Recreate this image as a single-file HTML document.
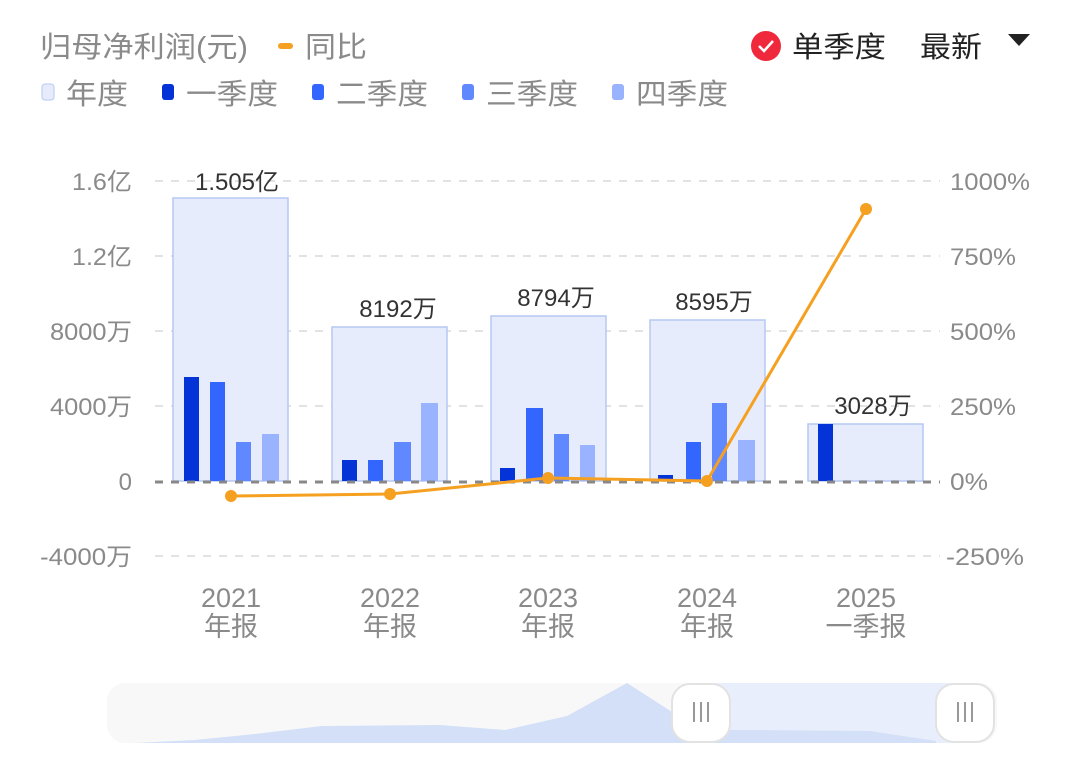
<!DOCTYPE html>
<html><head><meta charset="utf-8"><style>
html,body{margin:0;padding:0;background:#fff;width:1072px;height:764px;overflow:hidden;font-family:"Liberation Sans","Noto Sans CJK SC",sans-serif}
</style></head><body>
<svg width="1072" height="764" xmlns="http://www.w3.org/2000/svg" style="position:absolute;left:0;top:0;font-family:'Liberation Sans','Noto Sans CJK SC',sans-serif">
<!-- header -->
<text x="40" y="57" font-size="29" fill="#8a8a8a" textLength="208" lengthAdjust="spacingAndGlyphs">归母净利润(元)</text>
<rect x="278" y="43" width="15" height="6" rx="3" fill="#f5a020"/>
<text x="305" y="57" font-size="29" fill="#8a8a8a" textLength="62" lengthAdjust="spacingAndGlyphs">同比</text>
<circle cx="766" cy="46" r="15" fill="#f0283c"/>
<path d="M759 46 l5 5 l9 -10" stroke="#fff" stroke-width="2.5" fill="none"/>
<text x="792" y="57" font-size="29" fill="#222" textLength="94" lengthAdjust="spacingAndGlyphs">单季度</text>
<text x="920" y="57" font-size="29" fill="#222" textLength="62" lengthAdjust="spacingAndGlyphs">最新</text>
<path d="M1008 34 h22 l-11 12 z" fill="#222"/>
<!-- legend -->
<rect x="42" y="84" width="12" height="16" rx="3" fill="#e6ecfb" stroke="#b6c8f3"/>
<text x="66" y="104" font-size="29" fill="#8a8a8a" textLength="62" lengthAdjust="spacingAndGlyphs">年度</text>
<rect x="162" y="84" width="12" height="16" rx="3" fill="#0433d8"/>
<text x="186" y="104" font-size="29" fill="#8a8a8a" textLength="92" lengthAdjust="spacingAndGlyphs">一季度</text>
<rect x="312" y="84" width="12" height="16" rx="3" fill="#3366ff"/>
<text x="336" y="104" font-size="29" fill="#8a8a8a" textLength="92" lengthAdjust="spacingAndGlyphs">二季度</text>
<rect x="462" y="84" width="12" height="16" rx="3" fill="#6088ff"/>
<text x="486" y="104" font-size="29" fill="#8a8a8a" textLength="92" lengthAdjust="spacingAndGlyphs">三季度</text>
<rect x="612" y="84" width="12" height="16" rx="3" fill="#9ab3ff"/>
<text x="636" y="104" font-size="29" fill="#8a8a8a" textLength="92" lengthAdjust="spacingAndGlyphs">四季度</text>
<!-- grid -->
<g stroke="#e2e2e2" stroke-width="2" stroke-dasharray="8,8">
<line x1="155" y1="181" x2="940" y2="181"/><line x1="155" y1="256" x2="940" y2="256"/>
<line x1="155" y1="331" x2="940" y2="331"/><line x1="155" y1="406" x2="940" y2="406"/>
<line x1="155" y1="556" x2="940" y2="556"/>
</g>
<g font-size="24" fill="#8a8a8a" text-anchor="end">
<text x="132" y="190" textLength="60" lengthAdjust="spacingAndGlyphs">1.6亿</text><text x="132" y="265" textLength="60" lengthAdjust="spacingAndGlyphs">1.2亿</text><text x="132" y="340" textLength="82" lengthAdjust="spacingAndGlyphs">8000万</text>
<text x="132" y="415" textLength="82" lengthAdjust="spacingAndGlyphs">4000万</text><text x="132" y="490">0</text><text x="132" y="565" textLength="92" lengthAdjust="spacingAndGlyphs">-4000万</text>
</g>
<g font-size="24" fill="#8a8a8a">
<text x="950" y="190" textLength="80" lengthAdjust="spacingAndGlyphs">1000%</text><text x="950" y="265" textLength="66" lengthAdjust="spacingAndGlyphs">750%</text><text x="950" y="340" textLength="66" lengthAdjust="spacingAndGlyphs">500%</text>
<text x="950" y="415" textLength="66" lengthAdjust="spacingAndGlyphs">250%</text><text x="950" y="490" textLength="38" lengthAdjust="spacingAndGlyphs">0%</text><text x="946" y="565" textLength="78" lengthAdjust="spacingAndGlyphs">-250%</text>
</g>
<!-- year bars -->
<g fill="#e6ecfb" stroke="#b6c8f3" stroke-width="1.5">
<rect x="173" y="198" width="115" height="283"/>
<rect x="332" y="327" width="115" height="154"/>
<rect x="491" y="316" width="115" height="165"/>
<rect x="650" y="320" width="115" height="161"/>
<rect x="808" y="424" width="115" height="57"/>
</g>
<g font-size="24" fill="#333" text-anchor="middle">
<text x="237" y="190">1.505亿</text><text x="398" y="317">8192万</text><text x="556" y="306">8794万</text>
<text x="714" y="310">8595万</text><text x="873" y="414">3028万</text>
</g>
<!-- quarter bars -->
<g fill="#0433d8"><rect x="184" y="377" width="15" height="104"/><rect x="342" y="460" width="15" height="21"/><rect x="500" y="468" width="15" height="13"/><rect x="658" y="475" width="15" height="6"/><rect x="818" y="424" width="15" height="57"/></g>
<g fill="#3366ff"><rect x="210" y="382" width="15" height="99"/><rect x="368" y="460" width="15" height="21"/><rect x="526" y="408" width="17" height="73"/><rect x="686" y="442" width="15" height="39"/></g>
<g fill="#6088ff"><rect x="236" y="442" width="15" height="39"/><rect x="394" y="442" width="17" height="39"/><rect x="554" y="434" width="15" height="47"/><rect x="712" y="403" width="15" height="78"/></g>
<g fill="#9ab3ff"><rect x="262" y="434" width="17" height="47"/><rect x="421" y="403" width="17" height="78"/><rect x="580" y="445" width="15" height="36"/><rect x="738" y="440" width="17" height="41"/></g>
<line x1="155" y1="482" x2="940" y2="482" stroke="#888" stroke-width="3" stroke-dasharray="8,8"/>
<!-- line -->
<polyline points="231,496 390,494 548,478 707,481 866,209" fill="none" stroke="#f5a020" stroke-width="3"/>
<g fill="#f5a020"><circle cx="231" cy="496" r="6"/><circle cx="390" cy="494" r="6"/><circle cx="548" cy="478" r="6"/><circle cx="707" cy="481" r="6"/><circle cx="866" cy="209" r="6"/></g>
<!-- x labels -->
<g font-size="27" fill="#8a8a8a" text-anchor="middle">
<text x="231" y="607">2021</text><text x="231" y="636">年报</text>
<text x="390" y="607">2022</text><text x="390" y="636">年报</text>
<text x="548" y="607">2023</text><text x="548" y="636">年报</text>
<text x="707" y="607">2024</text><text x="707" y="636">年报</text>
<text x="866" y="607">2025</text><text x="866" y="636">一季报</text>
</g>
<!-- slider -->
<rect x="107" y="683" width="890" height="60" rx="18" fill="#f8f8f9"/>
<rect x="700" y="683" width="266" height="60" fill="#e8eefb"/>
<path d="M135 743 L195 740 L255 734 L322 726 L440 725 L505 730 L567 716 L627 683 L700 730 L750 730 L870 731 L936 741 L936 743 Z" fill="#d3e0f8"/>
<rect x="672" y="684" width="58" height="58" rx="18" fill="#fff" stroke="#e2e2e2" stroke-width="2"/>
<rect x="936" y="684" width="58" height="58" rx="18" fill="#fff" stroke="#e2e2e2" stroke-width="2"/>
<g stroke="#999" stroke-width="2">
<line x1="694" y1="702" x2="694" y2="722"/><line x1="701" y1="702" x2="701" y2="722"/><line x1="708" y1="702" x2="708" y2="722"/>
<line x1="958" y1="702" x2="958" y2="722"/><line x1="965" y1="702" x2="965" y2="722"/><line x1="972" y1="702" x2="972" y2="722"/>
</g>
</svg>
</body></html>
